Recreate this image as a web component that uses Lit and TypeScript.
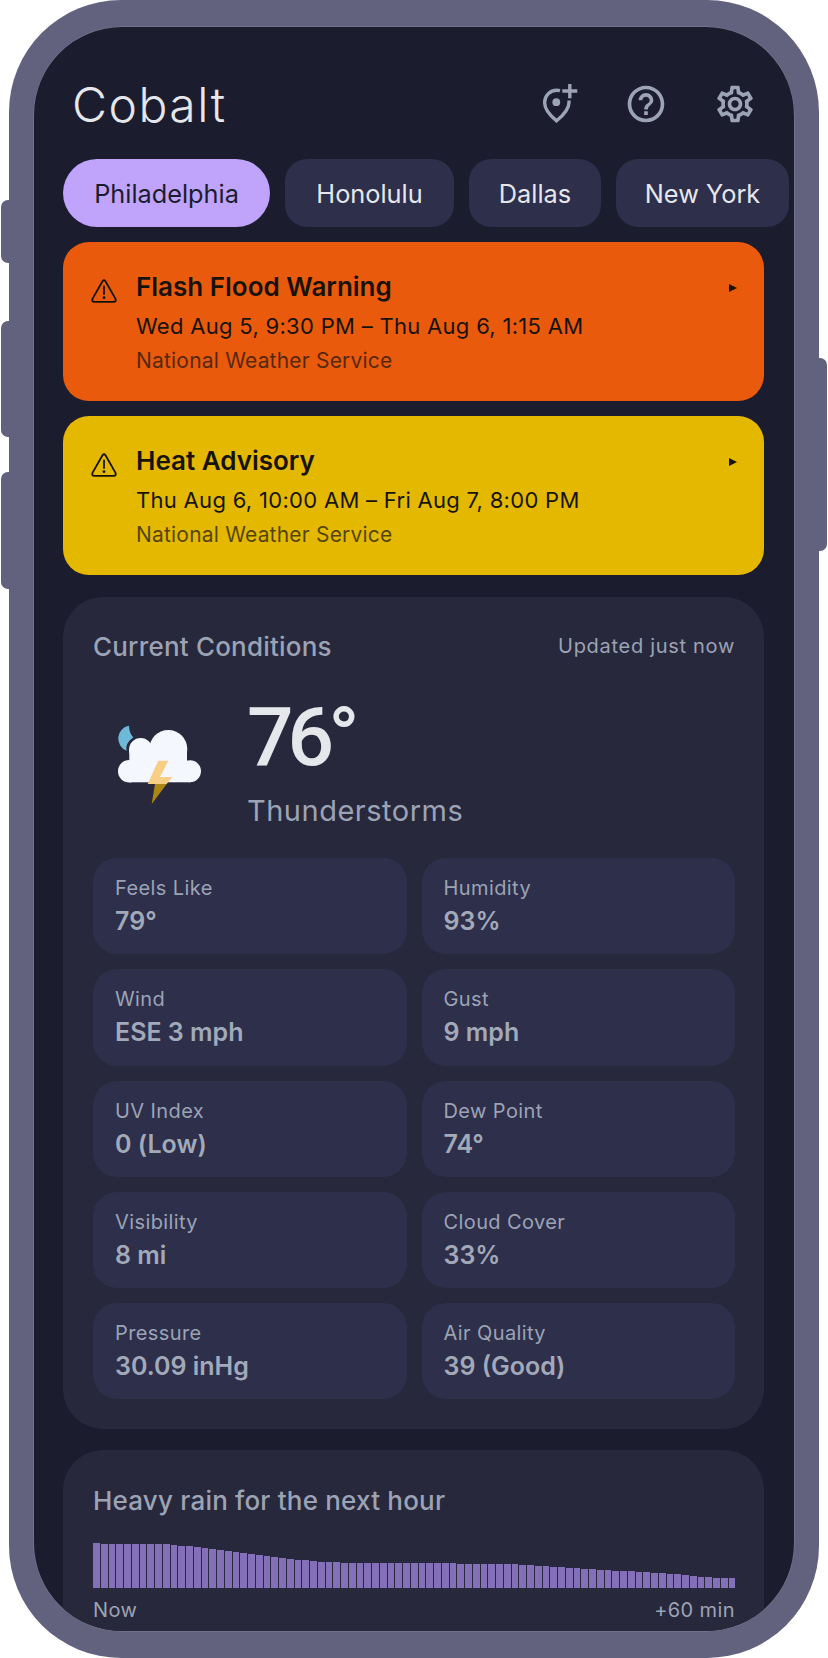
import { LitElement, html, css, svg } from "lit";
import { customElement } from "lit/decorators.js";

const CITIES = [
  { name: "Philadelphia", width: 207 },
  { name: "Honolulu", width: 169 },
  { name: "Dallas", width: 132 },
  { name: "New York", width: 173 },
];

const ALERTS = [
  { cls: "flood", title: "Flash Flood Warning", time: "Wed Aug 5, 9:30 PM – Thu Aug 6, 1:15 AM", src: "National Weather Service" },
  { cls: "heat", title: "Heat Advisory", time: "Thu Aug 6, 10:00 AM – Fri Aug 7, 8:00 PM", src: "National Weather Service" },
];

const STATS = [
  ["Feels Like", "79°"],
  ["Humidity", "93%"],
  ["Wind", "ESE 3 mph"],
  ["Gust", "9 mph"],
  ["UV Index", "0 (Low)"],
  ["Dew Point", "74°"],
  ["Visibility", "8 mi"],
  ["Cloud Cover", "33%"],
  ["Pressure", "30.09 inHg"],
  ["Air Quality", "39 (Good)"],
];

// rain curve read off the chart: [fraction across, bar height in px]
const CURVE = [
  [0, 45], [0.09, 44.5], [0.115, 44], [0.167, 41], [0.218, 37], [0.27, 32], [0.32, 28.7],
  [0.349, 27], [0.427, 25], [0.552, 25], [0.655, 24.5], [0.733, 21], [0.811, 18], [0.889, 15.5], [0.967, 11], [1, 10],
];
const BAR_COUNT = 83;

function barHeight(t: number) {
  for (let i = 1; i < CURVE.length; i++) {
    const [x0, y0] = CURVE[i - 1];
    const [x1, y1] = CURVE[i];
    if (t <= x1) return y0 + ((t - x0) / (x1 - x0)) * (y1 - y0);
  }
  return 10;
}

const warningIcon = svg`<svg class="warn" viewBox="0 0 26 24" width="26" height="24" fill="none" stroke="currentColor" stroke-width="1.8" stroke-linejoin="round">
  <path d="M11.5 2.2 1.6 19.6Q.3 22.8 3.5 22.9H22.5Q25.7 22.8 24.4 19.6L14.5 2.2Q13 .3 11.5 2.2Z"/>
  <path d="M13 7.5V15" stroke-linecap="round"/>
  <circle cx="13" cy="18.7" r="1.4" fill="currentColor" stroke="none"/>
</svg>`;

const pinIcon = svg`<svg viewBox="0 0 44 44" width="44" height="44" fill="none" stroke="currentColor" stroke-width="3.4">
  <path d="M25 8.7C23.9 8.4 22.9 8.3 21.8 8.3 15 8.3 9.6 13.7 9.6 20.5 9.6 27.5 15 33.5 21.6 38.8 28 33.5 34 27.5 34 20.5V18.5"/>
  <circle cx="21.3" cy="20.2" r="3.9" fill="currentColor" stroke="none"/>
  <path d="M27.3 9H42.3M34.8 2V16.3"/>
</svg>`;

const helpIcon = svg`<svg viewBox="0 0 24 24" width="44" height="44" fill="currentColor">
  <path d="M11 18h2v-2h-2v2zm1-16C6.48 2 2 6.48 2 12s4.48 10 10 10 10-4.48 10-10S17.52 2 12 2zm0 18c-4.41 0-8-3.59-8-8s3.59-8 8-8 8 3.59 8 8-3.59 8-8 8zm0-14c-2.21 0-4 1.79-4 4h2c0-1.1.9-2 2-2s2 .9 2 2c0 2-3 1.75-3 5h2c0-2.25 3-2.5 3-5 0-2.21-1.79-4-4-4z"/>
</svg>`;

const gearIcon = svg`<svg viewBox="0 0 24 24" width="44" height="44" fill="currentColor">
  <path d="M19.43 12.98c.04-.32.07-.64.07-.98 0-.34-.03-.66-.07-.98l2.11-1.65c.19-.15.24-.42.12-.64l-2-3.46c-.12-.22-.39-.3-.61-.22l-2.49 1c-.52-.4-1.08-.73-1.69-.98l-.38-2.65C14.46 2.18 14.25 2 14 2h-4c-.25 0-.46.18-.49.42l-.38 2.65c-.61.25-1.17.59-1.69.98l-2.49-1c-.23-.09-.49 0-.61.22l-2 3.46c-.13.22-.07.49.12.64l2.11 1.65c-.04.32-.07.65-.07.98 0 .33.03.66.07.98l-2.11 1.65c-.19.15-.24.42-.12.64l2 3.46c.12.22.39.3.61.22l2.49-1c.52.4 1.08.73 1.69.98l.38 2.65c.03.24.24.42.49.42h4c.25 0 .46-.18.49-.42l.38-2.65c.61-.25 1.17-.59 1.69-.98l2.49 1c.23.09.49 0 .61-.22l2-3.46c.12-.22.07-.49-.12-.64l-2.11-1.65zm-1.98-1.71c.04.31.05.52.05.73 0 .21-.02.43-.05.73l-.14 1.13.89.7 1.08.84-.7 1.21-1.27-.51-1.04-.42-.9.68c-.43.32-.84.56-1.25.73l-1.06.43-.16 1.13-.2 1.35h-1.4l-.19-1.35-.16-1.13-1.06-.43c-.43-.18-.83-.41-1.23-.71l-.91-.7-1.06.43-1.27.51-.7-1.21 1.08-.84.89-.7-.14-1.13c-.03-.31-.05-.54-.05-.74s.02-.43.05-.73l.14-1.13-.89-.7-1.08-.84.7-1.21 1.27.51 1.04.42.9-.68c.43-.32.84-.56 1.25-.73l1.06-.43.16-1.13.2-1.35h1.39l.19 1.35.16 1.13 1.06.43c.43.18.83.41 1.23.71l.91.7 1.06-.43 1.27-.51.7 1.21-1.07.85-.89.7.14 1.13zM12 8c-2.21 0-4 1.79-4 4s1.79 4 4 4 4-1.79 4-4-1.79-4-4-4zm0 6c-1.1 0-2-.9-2-2s.9-2 2-2 2 .9 2 2-.9 2-2 2z"/>
</svg>`;

// coordinates are px from the icon's top left corner
const stormIcon = svg`<svg class="storm" viewBox="0 0 90 85" width="90" height="85">
  <path d="M13 1.700A13 13 0 0 0 10.700 26.700C9.500 22 11.500 17.500 17.300 13.500 14.500 10.500 13 6 13 1.700Z" fill="#6fb9d8"/>
  <g fill="#f4f7fe">
    <circle cx="74" cy="47.300" r="11"/>
    <circle cx="52.300" cy="25" r="19"/>
    <circle cx="24.700" cy="25.700" r="11.700"/>
    <circle cx="13.300" cy="47.300" r="11.300"/>
    <rect x="13.300" y="47" width="60.700" height="11.300"/>
    <rect x="13.300" y="25" width="57.700" height="22.500"/>
  </g>
  <path d="M39 60H50.700L35.700 80Z" fill="#ad8512"/>
  <path d="M42.300 36.700H52.300L44 53H56.300L50.700 60H31.700Z" fill="#f8ce84"/>
</svg>`;

@customElement("app-root")
export class AppRoot extends LitElement {
  static styles = css`
    :host {
      display: block;
      width: 828px;
      height: 1658px;
      background: #fff;
      overflow: hidden;
      font-family: Inter, "Liberation Sans", sans-serif;
    }
    .device {
      position: relative;
      box-sizing: border-box;
      margin-left: 9px;
      width: 810px;
      height: 1658px;
      padding: 27px 25px;
      background: #62627f;
      border-radius: 112px;
    }
    .btn {
      position: absolute;
      width: 9px;
      background: #62627f;
    }
    .btn.left {
      left: -8px;
      border-radius: 7px 0 0 7px;
    }
    .btn.right {
      right: -8px;
      border-radius: 0 7px 7px 0;
    }
    .screen {
      height: 1604px;
      box-sizing: border-box;
      padding: 55px 30px 0 29px;
      overflow: hidden;
      background: #1b1c2e;
      border-radius: 88px;
      box-shadow: 0 0 0 0.5px rgba(255, 255, 255, 0.2);
    }
    .head {
      display: flex;
      align-items: center;
      justify-content: space-between;
      height: 44px;
      margin-bottom: 33px;
      padding-right: 7px;
    }
    .logo {
      margin-left: 9px;
      font-size: 48px;
      font-weight: 300;
      color: #e5e7eb;
      letter-spacing: 1.5px;
    }
    .actions {
      display: flex;
      gap: 45px;
      color: #9ca3b5;
    }
    .actions svg {
      display: block;
    }
    .chips {
      display: flex;
      gap: 15px;
      margin-right: -30px;
      margin-bottom: 15px;
      overflow: hidden;
    }
    .chip {
      flex: none;
      height: 68px;
      display: flex;
      align-items: center;
      justify-content: center;
      border-radius: 22px;
      background: #2d2f4b;
      color: #e5e7eb;
      font-size: 25.3px;
    }
    .chip.on {
      background: #c0a4fc;
      color: #1b1c2e;
      border-radius: 34px;
    }
    .alert {
      position: relative;
      display: flex;
      gap: 19px;
      height: 159px;
      box-sizing: border-box;
      padding: 26px 28px;
      border-radius: 26px;
      color: #17130c;
      margin-bottom: 15px;
    }
    .alert.flood {
      background: #e95a0c;
    }
    .alert.heat {
      background: #e5b800;
      margin-bottom: 22px;
    }
    .warn {
      flex: none;
      margin-top: 11px;
    }
    .alert-title {
      font-size: 26px;
      font-weight: 600;
      line-height: 38px;
    }
    .alert-time {
      font-size: 22px;
      letter-spacing: 0.3px;
      line-height: 38px;
      margin-top: 1px;
    }
    .alert-src {
      font-size: 21px;
      letter-spacing: 0.2px;
      line-height: 30px;
      margin-top: 1px;
      opacity: 0.7;
    }
    .arrow {
      position: absolute;
      top: 42px;
      right: 27px;
    }
    .card {
      background: #27283c;
      border-radius: 40px;
      padding: 29px 29px 30px 30px;
      margin-bottom: 21px;
    }
    .card-head {
      display: flex;
      align-items: center;
      justify-content: space-between;
      height: 40px;
    }
    .rain .card-head {
      margin-top: 1px;
    }
    .card-title {
      font-size: 26px;
      letter-spacing: 0.2px;
      font-weight: 500;
      color: #9ca3b5;
    }
    .updated {
      font-size: 20px;
      letter-spacing: 0.7px;
      color: #9ca3b5;
    }
    .hero {
      display: flex;
      height: 192px;
    }
    .storm {
      flex: none;
      margin: 58px 41px 0 23px;
    }
    .temp {
      font-family: Roboto, Inter, sans-serif;
      font-size: 82px;
      font-weight: 500;
      letter-spacing: -6px;
      line-height: 92px;
      margin-top: 25px;
      color: #e5e7eb;
    }
    .cond {
      font-size: 29px;
      letter-spacing: 0.5px;
      line-height: 40px;
      margin-top: 8px;
      color: #9ca3b5;
    }
    .stats {
      display: grid;
      grid-template-columns: 1fr 1fr;
      gap: 15px;
    }
    .stat {
      height: 96.3px;
      box-sizing: border-box;
      padding: 15px 22px;
      background: #2d2f4b;
      border-radius: 24px;
    }
    .stat-label {
      font-size: 20px;
      letter-spacing: 0.4px;
      line-height: 30px;
      color: #9ca3b5;
    }
    .stat-value {
      font-size: 25px;
      line-height: 36px;
      font-weight: 600;
      color: #a2aaba;
    }
    .bars {
      display: flex;
      align-items: flex-end;
      gap: 1px;
      height: 46px;
      margin-top: 22px;
    }
    .bar {
      flex: 1;
      background: #8470b8;
    }
    .axis {
      display: flex;
      justify-content: space-between;
      font-size: 20px;
      letter-spacing: 0.4px;
      line-height: 30px;
      margin-top: 7px;
      color: #9ca3b5;
    }
  `;

  render() {
    const bars = Array.from({ length: BAR_COUNT }, (_, i) => barHeight(i / (BAR_COUNT - 1)));
    return html`
      <div class="device">
        <div class="btn left" style="top:200px;height:63px"></div>
        <div class="btn left" style="top:321px;height:116px"></div>
        <div class="btn left" style="top:472px;height:117px"></div>
        <div class="btn right" style="top:358px;height:193px"></div>
        <div class="screen">
          <header class="head">
            <div class="logo">Cobalt</div>
            <div class="actions">${pinIcon}${helpIcon}${gearIcon}</div>
          </header>

          <nav class="chips">
            ${CITIES.map(
              (c, i) => html`<div class="chip ${i === 0 ? "on" : ""}" style="width:${c.width}px">${c.name}</div>`
            )}
          </nav>

          ${ALERTS.map(
            (a) => html`
              <section class="alert ${a.cls}">
                ${warningIcon}
                <div>
                  <div class="alert-title">${a.title}</div>
                  <div class="alert-time">${a.time}</div>
                  <div class="alert-src">${a.src}</div>
                </div>
                <svg class="arrow" viewBox="0 0 8 8" width="8" height="8"><path d="M0 0 8 4 0 8Z" fill="#17130c" /></svg>
              </section>
            `
          )}

          <section class="card">
            <div class="card-head">
              <div class="card-title">Current Conditions</div>
              <div class="updated">Updated just now</div>
            </div>
            <div class="hero">
              ${stormIcon}
              <div>
                <div class="temp">76°</div>
                <div class="cond">Thunderstorms</div>
              </div>
            </div>
            <div class="stats">
              ${STATS.map(
                ([k, v]) => html`
                  <div class="stat">
                    <div class="stat-label">${k}</div>
                    <div class="stat-value">${v}</div>
                  </div>
                `
              )}
            </div>
          </section>

          <section class="card rain">
            <div class="card-head"><div class="card-title">Heavy rain for the next hour</div></div>
            <div class="bars">
              ${bars.map((h) => html`<div class="bar" style="height:${h.toFixed(1)}px"></div>`)}
            </div>
            <div class="axis"><span>Now</span><span>+60 min</span></div>
          </section>
        </div>
      </div>
    `;
  }
}
